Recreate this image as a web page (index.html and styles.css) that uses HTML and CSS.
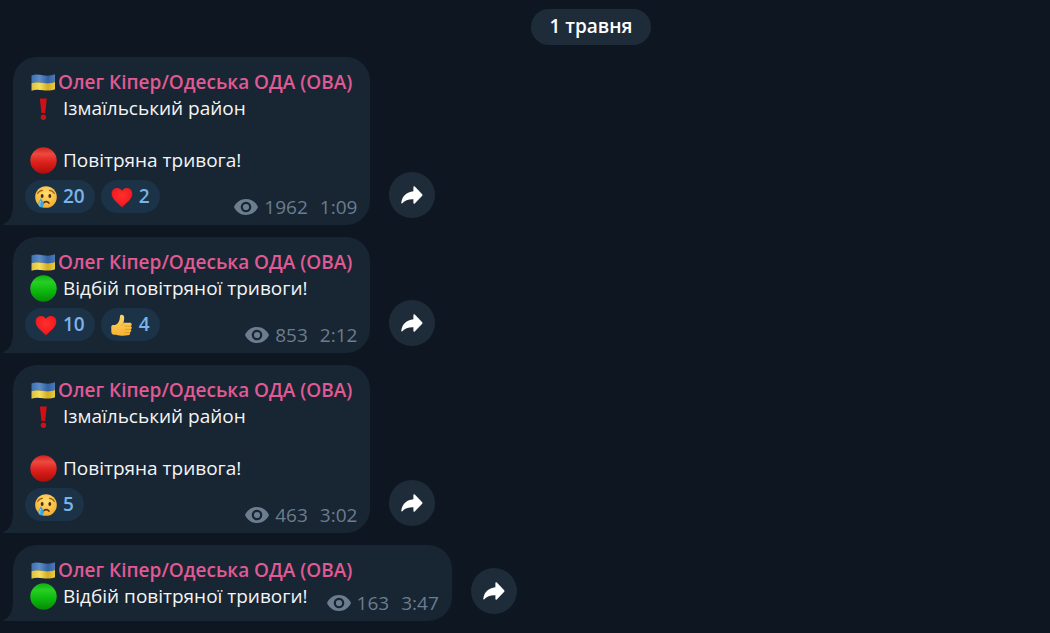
FILE: index.html
```html
<!DOCTYPE html>
<html lang="uk">
<head>
    <meta charset="UTF-8">
    <meta name="viewport" content="width=device-width, initial-scale=1.0">
    <title>Олег Кіпер/Одеська ОДА (ОВА)</title>
    <link rel="stylesheet" href="styles.css">
</head>
<body>
    <!-- shared icons -->
    <svg class="sprite" aria-hidden="true">
        <defs>
            <linearGradient id="redFill" x1="0" y1="0" x2="0" y2="1">
                <stop offset="0" stop-color="#d2201b"/>
                <stop offset="0.25" stop-color="#ec4a40"/>
                <stop offset="0.55" stop-color="#df211b"/>
                <stop offset="1" stop-color="#ad0d0b"/>
            </linearGradient>
            <linearGradient id="greenFill" x1="0" y1="0" x2="0" y2="1">
                <stop offset="0" stop-color="#0fae10"/>
                <stop offset="0.25" stop-color="#27cf24"/>
                <stop offset="0.6" stop-color="#0cb80d"/>
                <stop offset="1" stop-color="#078a07"/>
            </linearGradient>
            <linearGradient id="flagBlue" x1="0" y1="0" x2="1" y2="0">
                <stop offset="0" stop-color="#3f70b0"/>
                <stop offset="0.35" stop-color="#5b8ccc"/>
                <stop offset="0.7" stop-color="#35609f"/>
                <stop offset="1" stop-color="#4a7abb"/>
            </linearGradient>
            <linearGradient id="flagYellow" x1="0" y1="0" x2="1" y2="0">
                <stop offset="0" stop-color="#dcc040"/>
                <stop offset="0.35" stop-color="#f4de5c"/>
                <stop offset="0.7" stop-color="#d3ad22"/>
                <stop offset="1" stop-color="#ebcd42"/>
            </linearGradient>
            <radialGradient id="faceFill" cx="0.5" cy="0.35" r="0.7">
                <stop offset="0" stop-color="#ffdf70"/>
                <stop offset="1" stop-color="#f4a92c"/>
            </radialGradient>
            <radialGradient id="heartFill" cx="0.5" cy="0.4" r="0.65">
                <stop offset="0" stop-color="#ff2f2d"/>
                <stop offset="0.7" stop-color="#f41c20"/>
                <stop offset="1" stop-color="#c40a12"/>
            </radialGradient>
            <linearGradient id="thumbFill" x1="0" y1="0" x2="0" y2="1">
                <stop offset="0" stop-color="#ffd764"/>
                <stop offset="1" stop-color="#f7b233"/>
            </linearGradient>
        </defs>
        <symbol id="flag" viewBox="0 0 26 20">
            <path d="M1.500 3.500C5 2 9 2.400 13 3.200S21 3.800 25 2.200V10C21 11.600 17 11.600 13 10.800S5 9.800 1.500 11.200Z" fill="url(#flagBlue)"/>
            <path d="M1.500 11.200C5 9.800 9 10 13 10.800S21 11.600 25 10V17.200C21 18.800 17 18.800 13 18.200S5 17.300 1.500 18.800Z" fill="url(#flagYellow)"/>
        </symbol>
        <symbol id="mark" viewBox="0 0 27 27">
            <path d="M9.800 3.500H16.800L15.200 18H11.500Z" fill="#cf1015"/>
            <circle cx="13.400" cy="22.200" r="2.700" fill="#cf1015"/>
        </symbol>
        <symbol id="red" viewBox="0 0 27 27">
            <circle cx="13.500" cy="13.500" r="13.200" fill="url(#redFill)"/>
        </symbol>
        <symbol id="green" viewBox="0 0 27 27">
            <circle cx="13.500" cy="13.500" r="13.200" fill="url(#greenFill)"/>
        </symbol>
        <symbol id="cry" viewBox="0 0 24 24">
            <circle cx="12.500" cy="12.500" r="11.300" fill="url(#faceFill)"/>
            <path d="M3.800 8.800C5 6.700 6.700 5.700 8.800 5.600M16.200 5.600C18.300 5.700 20 6.700 21.200 8.800" fill="none" stroke="#9a5a14" stroke-width="1.200" stroke-linecap="round"/>
            <ellipse cx="8.500" cy="11.500" rx="1.500" ry="2.100" fill="#4b2a12"/>
            <ellipse cx="16.500" cy="11.500" rx="1.500" ry="2.100" fill="#4b2a12"/>
            <path d="M9.800 19C11 16.800 14.400 16.800 15.600 19" fill="none" stroke="#5a3010" stroke-width="1.600" stroke-linecap="round"/>
            <path d="M7 13.500C8.200 16 10.800 18 10.200 20.800C9.500 24 5.200 24 4.600 20.800C4.300 18 6.600 16 7 13.500Z" fill="#3fa3d8"/>
            <path d="M6.900 17.200C5.900 19 5.700 19.800 6.100 21.200" fill="none" stroke="#a4dcf5" stroke-width="1" stroke-linecap="round"/>
        </symbol>
        <symbol id="heart" viewBox="0 0 24 24">
            <path d="M12.500 23.500C9.700 19.600 1.700 15.200 1.700 8.800C1.700 5.300 4.200 3 7.200 3C9.600 3 11.500 4.200 12.500 6.200C13.500 4.200 15.400 3 17.800 3C20.800 3 23.300 5.300 23.300 8.800C23.300 15.200 15.300 19.600 12.500 23.500Z" fill="url(#heartFill)"/>
        </symbol>
        <symbol id="thumb" viewBox="0 0 24 24">
            <path d="M1.300 14.500C1.300 13 2.500 12.500 4 12.600C7.500 12.300 9.500 9.500 10 6.500L10.500 3C10.900 1.100 14.300 1.500 14.700 4C15 6.300 14.500 8.500 14 10.300H20.500C23 10.300 23.200 13 21.700 13.700C23.300 14.500 23 16.500 21.500 17C22.700 18 22.200 19.800 20.800 20.200C21.500 21.600 20.700 23.200 18.500 23.300C14 24 9.500 23.700 6.500 22.600C4 23.100 1.800 22.300 1.400 20.300Z" fill="url(#thumbFill)"/>
            <path d="M15.500 13.700H21.500M15.800 17.100H21.300M16 20.400H20.600M14 10.300C13.500 11.600 12.900 12.300 12.300 12.900" fill="none" stroke="#d58a1d" stroke-width="0.700" stroke-linecap="round"/>
        </symbol>
        <symbol id="eye" viewBox="0 0 24 16">
            <path fill-rule="evenodd" d="M12 0C6.500 0 2 3.300 0 8C2 12.700 6.500 16 12 16S22 12.700 24 8C22 3.300 17.500 0 12 0ZM12 2.700A5.300 5.300 0 1 1 12 13.300A5.300 5.300 0 1 1 12 2.700ZM12 4.900A3.100 3.100 0 1 0 12 11.100A3.100 3.100 0 1 0 12 4.900Z"/>
        </symbol>
        <symbol id="share" viewBox="0 0 22 18">
            <path d="M12.600 .5Q13.200 0 13.800 .6L21.200 8.200Q21.800 9 21.200 9.700L13.800 17.400Q12.600 18.200 12.400 17V13.200C7.500 13 4 14.200 1.300 17.300Q.2 18 .3 16.600C1.300 9.800 5.500 6 12.400 5.200V1.200Q12.300 .8 12.600 .5Z"/>
        </symbol>
        <symbol id="tail" viewBox="0 0 10 20">
            <path d="M10 0C10 10 7 16 .5 19Q0 20 1 20H10Z"/>
        </symbol>
    </svg>

    <main class="chat">
        <div class="date-row"><time class="date" datetime="05-01">1 травня</time></div>

        <div class="message">
            <article class="bubble">
                <h2 class="author"><svg class="flag"><use href="#flag"/></svg>Олег Кіпер/Одеська ОДА (ОВА)</h2>
                <p class="text"><svg class="emoji"><use href="#mark"/></svg>Ізмаїльський район</p>
                <p class="text spaced"><svg class="emoji"><use href="#red"/></svg>Повітряна тривога!</p>
                <div class="footer">
                    <div class="reactions">
                        <button class="reaction"><svg><use href="#cry"/></svg>20</button>
                        <button class="reaction"><svg><use href="#heart"/></svg>2</button>
                    </div>
                    <div class="meta"><svg class="eye"><use href="#eye"/></svg><span>1962</span><time>1:09</time></div>
                </div>
                <svg class="tail"><use href="#tail"/></svg>
            </article>
            <button class="share" aria-label="Переслати"><svg><use href="#share"/></svg></button>
        </div>

        <div class="message">
            <article class="bubble">
                <h2 class="author"><svg class="flag"><use href="#flag"/></svg>Олег Кіпер/Одеська ОДА (ОВА)</h2>
                <p class="text"><svg class="emoji"><use href="#green"/></svg>Відбій повітряної тривоги!</p>
                <div class="footer">
                    <div class="reactions">
                        <button class="reaction"><svg><use href="#heart"/></svg>10</button>
                        <button class="reaction"><svg><use href="#thumb"/></svg>4</button>
                    </div>
                    <div class="meta"><svg class="eye"><use href="#eye"/></svg><span>853</span><time>2:12</time></div>
                </div>
                <svg class="tail"><use href="#tail"/></svg>
            </article>
            <button class="share" aria-label="Переслати"><svg><use href="#share"/></svg></button>
        </div>

        <div class="message">
            <article class="bubble">
                <h2 class="author"><svg class="flag"><use href="#flag"/></svg>Олег Кіпер/Одеська ОДА (ОВА)</h2>
                <p class="text"><svg class="emoji"><use href="#mark"/></svg>Ізмаїльський район</p>
                <p class="text spaced"><svg class="emoji"><use href="#red"/></svg>Повітряна тривога!</p>
                <div class="footer">
                    <div class="reactions">
                        <button class="reaction"><svg><use href="#cry"/></svg>5</button>
                    </div>
                    <div class="meta"><svg class="eye"><use href="#eye"/></svg><span>463</span><time>3:02</time></div>
                </div>
                <svg class="tail"><use href="#tail"/></svg>
            </article>
            <button class="share" aria-label="Переслати"><svg><use href="#share"/></svg></button>
        </div>

        <div class="message">
            <article class="bubble">
                <h2 class="author"><svg class="flag"><use href="#flag"/></svg>Олег Кіпер/Одеська ОДА (ОВА)</h2>
                <div class="last-line">
                    <p class="text"><svg class="emoji"><use href="#green"/></svg>Відбій повітряної тривоги!</p>
                    <div class="meta"><svg class="eye"><use href="#eye"/></svg><span>163</span><time>3:47</time></div>
                </div>
                <svg class="tail"><use href="#tail"/></svg>
            </article>
            <button class="share" aria-label="Переслати"><svg><use href="#share"/></svg></button>
        </div>
    </main>
</body>
</html>
```
FILE: styles.css
```css
* {
    box-sizing: border-box;
}

body {
    margin: 0;
    min-height: 100vh;
    background-color: #0e1621;
    color: #f5f5f5;
    font-family: "Open Sans", "Noto Sans", sans-serif;
    font-size: 19px;
    line-height: 26px;
}

h2, p {
    margin: 0;
    font-size: inherit;
}

button {
    border: none;
    font: inherit;
    cursor: pointer;
}

.sprite {
    position: absolute;
    width: 0;
    height: 0;
}

.chat {
    display: flex;
    flex-direction: column;
    gap: 12px;
    padding: 9px 13px 12px;
}

.date-row {
    display: flex;
    justify-content: center;
    padding-left: 132px;
}

.date {
    padding: 4px 18px 6px;
    border-radius: 18px;
    background-color: #1e2c3a;
    color: #fff;
    font-weight: 600;
}

.message {
    display: flex;
    align-items: flex-end;
    gap: 19px;
}

.bubble {
    position: relative;
    padding: 12px 13px 12px 12px;
    border-radius: 24px 24px 24px 0;
    background-color: #182533;
}

.author {
    display: flex;
    align-items: center;
    padding: 0 5px;
    color: #e05a94;
    font-weight: 600;
}

.flag {
    width: 26px;
    height: 20px;
    margin-right: 2px;
}

.text {
    display: flex;
    align-items: center;
    gap: 6px;
    padding-left: 5px;
}

.spaced {
    margin-top: 26px;
}

.emoji {
    width: 27px;
    height: 27px;
    margin: -1px 0;
}

.footer {
    display: flex;
    justify-content: space-between;
    align-items: flex-end;
    margin-top: 7px;
}

.last-line {
    display: flex;
    align-items: flex-end;
    gap: 19px;
}

.reactions {
    display: flex;
    gap: 6px;
}

.reaction {
    display: flex;
    align-items: center;
    gap: 6px;
    height: 33px;
    padding: 0 10px 1px 9px;
    border-radius: 17px;
    background-color: #1c3347;
    color: #79b3ea;
    font-weight: 600;
}

.reaction svg {
    width: 23px;
    height: 23px;
}

.meta {
    display: flex;
    align-items: center;
    margin-bottom: -7px;
    color: #6b7d8e;
}

.meta time {
    margin-left: 12px;
}

.eye {
    width: 24px;
    height: 16px;
    margin-right: 6px;
    fill: #6b7d8e;
}

.share {
    display: flex;
    justify-content: center;
    align-items: center;
    width: 46px;
    height: 46px;
    margin-bottom: 7px;
    padding: 0;
    border-radius: 50%;
    background-color: #1e2c3a;
}

.share svg {
    width: 22px;
    height: 18px;
    fill: #fff;
}

.tail {
    position: absolute;
    right: 100%;
    bottom: 0;
    width: 10px;
    height: 20px;
    fill: #182533;
}
```
